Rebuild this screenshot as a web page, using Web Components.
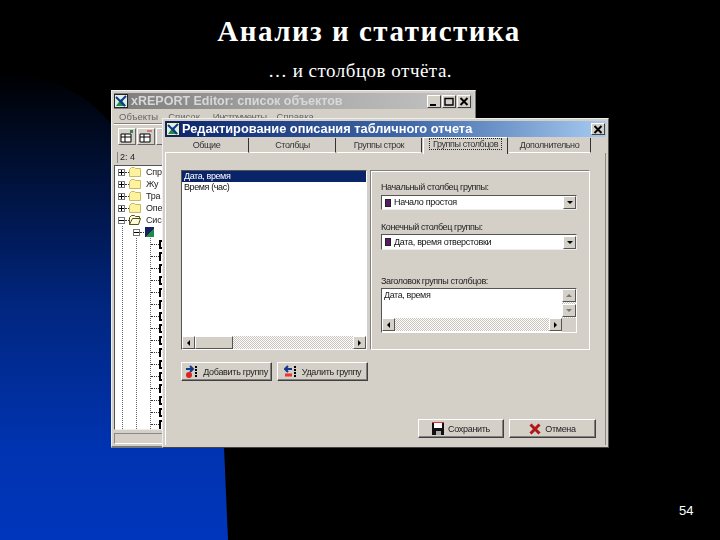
<!DOCTYPE html>
<html lang="ru">
<head>
<meta charset="utf-8">
<title>Анализ и статистика</title>
<style>
    html, body { margin: 0; padding: 0; background: #000; }
</style>
</head>
<body>
<slide-page>
    <span slot="title">Анализ и статистика</span>
    <span slot="subtitle">… и столбцов отчёта.</span>
    <span slot="number">54</span>

    <report-window></report-window>

    <table-dialog></table-dialog>
</slide-page>

<script>
const appIcon = `<svg width="14" height="14" viewBox="0 0 14 14" style="flex:none">
    <rect x=".5" y=".5" width="13" height="13" fill="#dff0ea" stroke="#222"/>
    <path d="M2 12 L7 5 L12 12 Z" fill="#1f8a4c"/>
    <path d="M2 3 L11 12 M12 2 L7 7" stroke="#123a8a" stroke-width="2"/>
</svg>`;

const slidePage = document.createElement('template');
slidePage.innerHTML = `
    <style>
        :host {
            display: block;
            position: relative;
            width: 720px;
            height: 540px;
            overflow: hidden;
            background: #000;
            color: #fff;
            font-family: "Liberation Serif", serif;
        }
        .back { position: absolute; left: 0; top: 0; }
        .head {
            position: relative;
            text-align: center;
        }
        h1 {
            margin: 0;
            padding: 13px 0 0 18px;
            font-size: 29px;
            line-height: 36px;
            font-weight: bold;
            letter-spacing: 1.5px;
        }
        p {
            margin: 0;
            padding-top: 11px;
            font-size: 19px;
            line-height: 22px;
            letter-spacing: .5px;
        }
        .num {
            position: absolute;
            left: 679px;
            top: 503px;
            font: 13px/16px "Liberation Sans", sans-serif;
        }
        .desk { position: absolute; left: 0; top: 0; width: 720px; height: 540px; filter: blur(.4px); }
    </style>
    <svg class="back" width="720" height="540">
        <defs>
            <linearGradient id="blue" x1="0" y1="0" x2="0" y2="1">
                <stop offset="0" stop-color="#000"/>
                <stop offset=".5" stop-color="#01267f"/>
                <stop offset=".8" stop-color="#0033b0"/>
                <stop offset="1" stop-color="#0036bc"/>
            </linearGradient>
        </defs>
        <path d="M0 72 C45 72 85 92 112 125 L224 447 L228 540 L0 540 Z" fill="url(#blue)"/>
    </svg>
    <div class="head">
        <h1><slot name="title"></slot></h1>
        <p><slot name="subtitle"></slot></p>
    </div>
    <div class="desk"><slot></slot></div>
    <div class="num"><slot name="number"></slot></div>
`;
class SlidePage extends HTMLElement {
    constructor() {
        super();
        this.attachShadow({mode: 'open'});
        this.shadowRoot.appendChild(slidePage.content.cloneNode(true));
    }
}
customElements.define('slide-page', SlidePage);

const sysBtn = document.createElement('template');
sysBtn.innerHTML = `
    <style>
        :host {
            display: flex;
            align-items: center;
            justify-content: center;
            width: 14px;
            height: 13px;
            flex: none;
            box-sizing: border-box;
            background: #d4d0c8;
            border: 1px solid;
            border-color: #fff #404040 #404040 #fff;
            color: #000;
        }
    </style>
    <slot></slot>
`;
class SysBtn extends HTMLElement {
    constructor() {
        super();
        this.attachShadow({mode: 'open'});
        this.shadowRoot.appendChild(sysBtn.content.cloneNode(true));
    }
}
customElements.define('sys-btn', SysBtn);

const treeRow = document.createElement('template');
treeRow.innerHTML = `
    <style>
        :host {
            display: flex;
            align-items: center;
            height: 12px;
            white-space: nowrap;
            font: 9px/12px "Liberation Sans", sans-serif;
            letter-spacing: -.2px;
            color: #222;
        }
        #row { display: flex; align-items: center; }
        .box {
            width: 7px;
            height: 7px;
            box-sizing: border-box;
            border: 1px solid #777;
            background: linear-gradient(#000,#000) center/5px 1px no-repeat;
            flex: none;
        }
        .box.plus {
            background: linear-gradient(#000,#000) center/5px 1px no-repeat, linear-gradient(#000,#000) center/1px 5px no-repeat;
        }
        .dash { width: 4px; border-top: 1px dotted #333; flex: none; }
        svg { flex: none; margin-right: 5px; }
        .guide { width: 14px; height: 12px; flex: none; background: linear-gradient(#666 50%, transparent 50%) 4px 0/1px 2px repeat-y; }
        .guide.last { width: 5px; }
        .leaf { width: 4px; height: 9px; border: 2px solid #000; border-right: none; box-sizing: border-box; flex: none; }
        .leaf.short { border-bottom: none; }
        .node { width: 9px; height: 10px; flex: none; margin: 0 4px 0 1px; background: linear-gradient(135deg,#15225c 55%,#1f8a4c 55%); }
    </style>
    <span id="row"></span><slot></slot>
`;
class TreeRow extends HTMLElement {
    constructor() {
        super();
        this.attachShadow({mode: 'open'});
        this.shadowRoot.appendChild(treeRow.content.cloneNode(true));
    }
    connectedCallback() {
        const row = this.shadowRoot.querySelector('#row');
        const kind = this.getAttribute('kind');
        if (kind === 'folder') {
            row.innerHTML = '<i class="box plus"></i><i class="dash"></i><svg width="12" height="10" viewBox="0 0 12 10"><path d="M.5 9.5v-7l2-2h3l1 1h5v8z" fill="#fff29e" stroke="#c8b860"/></svg>';
        } else if (kind === 'open') {
            row.innerHTML = '<i class="box"></i><i class="dash"></i><svg width="12" height="10" viewBox="0 0 12 10"><path d="M.5 9.5v-7l2-2h3l1 1h4v2h-7l-3 6h9l2-6h-3" fill="#fffbd0" stroke="#55501c"/></svg>';
        } else if (kind === 'node') {
            row.innerHTML = '<i class="guide" style="width:15px"></i><i class="box"></i><i class="dash"></i><i class="node"></i>';
        } else {
            const cl = kind === 'short' ? 'leaf short' : 'leaf';
            row.innerHTML = '<i class="guide"></i><i class="guide"></i><i class="guide last"></i><i class="dash" style="width:8px"></i><i class="' + cl + '"></i>';
        }
    }
}
customElements.define('tree-row', TreeRow);

const reportWindow = document.createElement('template');
reportWindow.innerHTML = `
    <style>
        :host {
            display: flex;
            flex-direction: column;
            position: absolute;
            left: 111px;
            top: 90px;
            width: 365px;
            height: 358px;
            box-sizing: border-box;
            padding: 2px;
            background: #d4d0c8;
            border-right: 1px solid #777;
            border-bottom: 2px solid #777;
            border-top: 1px solid #eee;
            border-left: 1px solid #eee;
            font-family: "Liberation Sans", sans-serif;
            color: #666;
        }
        .title {
            display: flex;
            align-items: center;
            gap: 3px;
            height: 16px;
            flex: none;
            background: linear-gradient(90deg, #7c7c7c, #a8a8a8 50%, #c4c4c4);
            color: #d8d8d8;
            font: bold 12.5px/16px "Liberation Sans", sans-serif;
            white-space: nowrap;
        }
        .title span { flex: 1; }
        .ctl { display: flex; margin-right: 2px; gap: 1px; }
        .menu {
            display: flex;
            gap: 10px;
            height: 15px;
            flex: none;
            padding: 1px 0 0 5px;
            font: 9.5px/14px "Liberation Sans", sans-serif;
            border-bottom: 1px solid #808080;
            box-sizing: border-box;
            box-shadow: 0 1px 0 #fff;
        }
        .menu .tools-item { margin-left: 3px; letter-spacing: -.5px; }
        .tools {
            display: flex;
            gap: 1px;
            height: 22px;
            flex: none;
            box-sizing: border-box;
            padding: 4px 0 0 4px;
        }
        .tool {
            width: 18px;
            height: 17px;
            box-sizing: border-box;
            border: 1px solid;
            border-color: #fff #666 #666 #fff;
            display: flex;
            align-items: center;
            justify-content: center;
        }
        .stat {
            height: 11px;
            flex: none;
            margin: 6px 0 2px 3px;
            padding-left: 2px;
            width: 42px;
            border-left: 1px solid #888;
            border-right: 1px solid #888;
            color: #222;
            font: 9px/11px "Liberation Sans", sans-serif;
        }
        .tree {
            flex: none;
            height: 265px;
            margin-right: 2px;
            padding: 0 0 0 3px;
            box-sizing: border-box;
            background: #fff;
            border: 1px solid;
            border-color: #555 #eee #eee #555;
            overflow: hidden;
        }
        .bar {
            flex: 1;
            margin-top: 3px;
            border: 1px solid;
            border-color: #888 #fff #fff #888;
        }
    </style>
    <div class="title">${appIcon}<span>xREPORT Editor: список объектов</span>
        <div class="ctl">
            <sys-btn><svg width="10" height="9"><path d="M1 8h6" stroke="#000" stroke-width="2"/></svg></sys-btn>
            <sys-btn><svg width="10" height="9"><path d="M1 1.5h8v6.5h-8z" fill="none" stroke="#000" stroke-width="1.4"/></svg></sys-btn>
            <sys-btn><svg width="10" height="9"><path d="M1.5 1l7 7M8.5 1l-7 7" stroke="#000" stroke-width="2"/></svg></sys-btn>
        </div>
    </div>
    <div class="menu"><span>Объекты</span><span>Список</span><span class="tools-item">Инструменты</span><span>Справка</span></div>
    <div class="tools">
        <div class="tool"><svg width="14" height="13" viewBox="0 0 14 13"><path d="M1 4h10v8H1z M1 7h10 M5 4v8" fill="#fff" stroke="#000"/><path d="M10 0h3v3h-3z" fill="#1f8a4c"/></svg></div>
        <div class="tool"><svg width="14" height="13" viewBox="0 0 14 13"><path d="M1 4h10v8H1z M1 7h10 M5 4v8" fill="#fff" stroke="#000"/><path d="M8 1h5" stroke="#c22"/></svg></div>
        <div class="tool"></div>
    </div>
    <div class="stat">2: 4</div>
    <div class="tree">
        <tree-row kind="folder">Спр</tree-row>
        <tree-row kind="folder">Жу</tree-row>
        <tree-row kind="folder">Тра</tree-row>
        <tree-row kind="folder">Опе</tree-row>
        <tree-row kind="open">Сис</tree-row>
        <tree-row kind="node"></tree-row>
    </div>
    <div class="bar"></div>
`;
class ReportWindow extends HTMLElement {
    constructor() {
        super();
        this.attachShadow({mode: 'open'});
        this.shadowRoot.appendChild(reportWindow.content.cloneNode(true));
        const tree = this.shadowRoot.querySelector('.tree');
        // leaves of the open node: 1 = full bracket, 0 = short one
        const leaves = [1,0,0,1,0,0,1,1,1,0,1,1,0,1,1,0];
        leaves.forEach(l => {
            const row = document.createElement('tree-row');
            row.setAttribute('kind', l ? 'leaf' : 'short');
            tree.appendChild(row);
        });
    }
}
customElements.define('report-window', ReportWindow);

const hScroll = document.createElement('template');
hScroll.innerHTML = `
    <style>
        :host {
            display: flex;
            height: 13px;
            flex: none;
            background: repeating-conic-gradient(#fff 0 25%, #c8c4bc 0 50%) 0 0/2px 2px;
        }
        .b {
            width: 13px;
            box-sizing: border-box;
            background: #d4d0c8;
            border: 1px solid;
            border-color: #fff #555 #555 #fff;
            display: flex;
            align-items: center;
            justify-content: center;
        }
        .t { width: 38px; }
        .sp { flex: 1; }
        i { display: block; border: 3px solid transparent; }
        .l { border-right-color: #000; border-left-width: 0; }
        .r { border-left-color: #000; border-right-width: 0; }
    </style>
    <div class="b"><i class="l"></i></div>
    <div class="b t" id="thumb"></div>
    <div class="sp"></div>
    <div class="b"><i class="r"></i></div>
`;
class HScroll extends HTMLElement {
    constructor() {
        super();
        this.attachShadow({mode: 'open'});
        this.shadowRoot.appendChild(hScroll.content.cloneNode(true));
    }
    connectedCallback() {
        if (this.hasAttribute('nothumb')) this.shadowRoot.querySelector('#thumb').remove();
    }
}
customElements.define('h-scroll', HScroll);

const comboBox = document.createElement('template');
comboBox.innerHTML = `
    <style>
        :host {
            display: flex;
            align-items: center;
            height: 15px;
            flex: none;
            box-sizing: border-box;
            background: #fff;
            border: 1px solid;
            border-color: #555 #eee #eee #555;
            padding-left: 3px;
            gap: 3px;
            font: 9px/13px "Liberation Sans", sans-serif;
            letter-spacing: -.3px;
            color: #111;
            white-space: nowrap;
        }
        .ic { width: 6px; height: 8px; background: #5a1a66; border: 1px solid #222; box-sizing: border-box; flex: none; }
        .txt { flex: 1; }
        .arrow {
            width: 13px;
            height: 13px;
            box-sizing: border-box;
            background: #d4d0c8;
            border: 1px solid;
            border-color: #fff #555 #555 #fff;
            display: flex;
            align-items: center;
            justify-content: center;
        }
        .arrow i { border: 3px solid transparent; border-top-color: #000; border-bottom-width: 0; }
    </style>
    <i class="ic"></i><span class="txt"><slot></slot></span><div class="arrow"><i></i></div>
`;
class ComboBox extends HTMLElement {
    constructor() {
        super();
        this.attachShadow({mode: 'open'});
        this.shadowRoot.appendChild(comboBox.content.cloneNode(true));
    }
}
customElements.define('combo-box', ComboBox);

const winButton = document.createElement('template');
winButton.innerHTML = `
    <style>
        :host {
            display: flex;
            align-items: center;
            justify-content: center;
            gap: 4px;
            box-sizing: border-box;
            height: 19px;
            flex: none;
            background: #d4d0c8;
            border: 1px solid;
            border-color: #fff #404040 #404040 #fff;
            box-shadow: inset -1px -1px 0 #808080;
            font: 9px/14px "Liberation Sans", sans-serif;
            letter-spacing: -.3px;
            color: #222;
            white-space: nowrap;
        }
    </style>
    <slot name="icon"></slot><slot></slot>
`;
class WinButton extends HTMLElement {
    constructor() {
        super();
        this.attachShadow({mode: 'open'});
        this.shadowRoot.appendChild(winButton.content.cloneNode(true));
    }
}
customElements.define('win-button', WinButton);

const tableDialog = document.createElement('template');
tableDialog.innerHTML = `
    <style>
        :host {
            display: flex;
            flex-direction: column;
            position: absolute;
            left: 162px;
            top: 118px;
            width: 447px;
            height: 330px;
            box-sizing: border-box;
            padding: 2px;
            background: #d4d0c8;
            border: 1px solid;
            border-color: #eee #555 #444 #eee;
            font-family: "Liberation Sans", sans-serif;
            color: #222;
        }
        .title {
            display: flex;
            align-items: center;
            gap: 2px;
            height: 16px;
            flex: none;
            padding-left: 1px;
            background: linear-gradient(90deg, #0a246a, #3f68a8 55%, #a6caf0);
            color: #fff;
            font: bold 12.8px/16px "Liberation Sans", sans-serif;
            white-space: nowrap;
        }
        .title span { flex: 1; }
        .title sys-btn { margin-right: 1px; height: 12px; }
        .tabs {
            display: flex;
            gap: 1px;
            height: 16px;
            flex: none;
            box-sizing: border-box;
            padding-top: 1px;
            font: 9px/15px "Liberation Sans", sans-serif;
            letter-spacing: -.4px;
            text-align: center;
            color: #333;
        }
        .tab {
            box-sizing: border-box;
            border-right: 1px solid #333;
            border-bottom: 1px solid #fff;
            white-space: nowrap;
        }
        .tab.on {
            border-top: 1px solid #fff;
            border-left: 1px solid #fff;
            border-bottom: none;
            margin-top: -1px;
            height: 17px;
            line-height: 13px;
        }
        .tab.on span { outline: 1px dotted #222; padding: 0 3px; }
        .panel {
            flex: 1;
            display: flex;
            flex-direction: column;
            padding: 17px 9px 7px 15px;
            border-right: 1px solid #888;
            border-left: 1px solid #fff;
        }
        .top { display: flex; gap: 3px; height: 180px; flex: none; }
        .list {
            display: flex;
            flex-direction: column;
            width: 186px;
            box-sizing: border-box;
            background: #fff;
            border: 1px solid;
            border-color: #555 #fff #fff #555;
            font: 9px/11px "Liberation Sans", sans-serif;
            letter-spacing: -.4px;
            color: #111;
        }
        .rows { flex: 1; }
        .rows div { height: 11px; padding-left: 2px; }
        .rows .sel { background: #0a246a; color: #fff; }
        .group {
            display: flex;
            flex-direction: column;
            width: 220px;
            box-sizing: border-box;
            padding: 9px 12px 0 10px;
            border: 1px solid;
            border-color: #808080 #fff #fff #808080;
            box-shadow: inset 1px 1px 0 #fff;
            font: 9px/14px "Liberation Sans", sans-serif;
            letter-spacing: -.4px;
        }
        label { display: block; height: 15px; white-space: nowrap; }
        .l2 { margin-top: 10px; height: 14px; }
        .l3 { margin-top: 24px; height: 14px; }
        .area {
            display: grid;
            grid-template-columns: 1fr 14px;
            grid-template-rows: 1fr 14px;
            height: 45px;
            flex: none;
            box-sizing: border-box;
            background: #fff;
            border: 1px solid;
            border-color: #555 #fff #fff #555;
        }
        .area .text { padding: 1px 2px; line-height: 11px; }
        .vs { display: flex; flex-direction: column; gap: 2px; background: repeating-conic-gradient(#fff 0 25%, #c8c4bc 0 50%) 0 0/2px 2px; }
        .vs div {
            height: 13px;
            box-sizing: border-box;
            background: #d4d0c8;
            border: 1px solid;
            border-color: #fff #555 #555 #fff;
            display: flex;
            align-items: center;
            justify-content: center;
        }
        .vs i { display: block; border: 3px solid transparent; }
        .vs .u { border-bottom-color: #777; border-top-width: 0; }
        .vs .d { border-top-color: #777; border-bottom-width: 0; }
        .corner { background: #d4d0c8; }
        .row { display: flex; gap: 5px; margin-top: 12px; }
        .row win-button { width: 91px; }
        .foot { display: flex; justify-content: flex-end; gap: 5px; margin-top: auto; }
        .foot win-button { width: 86px; }
        .foot win-button + win-button { width: 87px; }
    </style>
    <div class="title">${appIcon}<span>Редактирование описания табличного отчета</span>
        <sys-btn><svg width="10" height="9"><path d="M1.5 1l7 7M8.5 1l-7 7" stroke="#000" stroke-width="2"/></svg></sys-btn>
    </div>
    <div class="tabs">
        <div class="tab" style="width:84px">Общие</div>
        <div class="tab" style="width:86px">Столбцы</div>
        <div class="tab" style="width:85px">Группы строк</div>
        <div class="tab on" style="width:85px"><span>Группы столбцов</span></div>
        <div class="tab" style="width:82px">Дополнительно</div>
    </div>
    <div class="panel">
        <div class="top">
            <div class="list">
                <div class="rows">
                    <div class="sel">Дата, время</div>
                    <div>Время (час)</div>
                </div>
                <h-scroll></h-scroll>
            </div>
            <div class="group">
                <label>Начальный столбец группы:</label>
                <combo-box>Начало простоя</combo-box>
                <label class="l2">Конечный столбец группы:</label>
                <combo-box style="height:16px">Дата, время отверстовки</combo-box>
                <label class="l3">Заголовок группы столбцов:</label>
                <div class="area">
                    <div class="text">Дата, время</div>
                    <div class="vs"><div><i class="u"></i></div><div><i class="d"></i></div></div>
                    <h-scroll nothumb></h-scroll>
                    <div class="corner"></div>
                </div>
            </div>
        </div>
        <div class="row">
            <win-button>
                <svg slot="icon" width="14" height="14" viewBox="0 0 14 14"><path d="M1 4h7M5 1l3 3-3 3" fill="none" stroke="#123a8a" stroke-width="2"/><circle cx="4" cy="10" r="3" fill="#d22"/><path d="M11 1v12" stroke="#000" stroke-width="2" stroke-dasharray="2 1"/></svg>
                Добавить группу
            </win-button>
            <win-button>
                <svg slot="icon" width="14" height="14" viewBox="0 0 14 14"><path d="M8 4H1M4 1L1 4l3 3" fill="none" stroke="#123a8a" stroke-width="2"/><path d="M1 10h7" stroke="#e33" stroke-width="3"/><path d="M11 1v12" stroke="#000" stroke-width="2" stroke-dasharray="2 1"/></svg>
                Удалить группу
            </win-button>
        </div>
        <div class="foot">
            <win-button>
                <svg slot="icon" width="12" height="13" viewBox="0 0 12 13"><path d="M0 0h12v13H0z" fill="#111"/><path d="M2 1h8v5H2z" fill="#fff"/><path d="M0 .5h12" stroke="#d33"/><path d="M4 9h5v4H4z" fill="#aaa"/></svg>
                Сохранить
            </win-button>
            <win-button>
                <svg slot="icon" width="12" height="12" viewBox="0 0 12 12"><path d="M1.5 1.5l9 9M10.5 1.5l-9 9" stroke="#b01818" stroke-width="3"/></svg>
                Отмена
            </win-button>
        </div>
    </div>
`;
class TableDialog extends HTMLElement {
    constructor() {
        super();
        this.attachShadow({mode: 'open'});
        this.shadowRoot.appendChild(tableDialog.content.cloneNode(true));
    }
}
customElements.define('table-dialog', TableDialog);
</script>
</body>
</html>
